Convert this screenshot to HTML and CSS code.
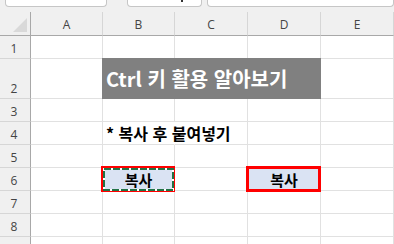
FILE: index.html
```html
<!DOCTYPE html>
<html lang="ko">
  <head>
    <meta charset="UTF-8" />
    <meta name="viewport" content="width=device-width, initial-scale=1.0" />
    <title>Ctrl 키 활용</title>
    <link rel="stylesheet" href="styles.css">
  </head>
  <body>
    <div class="sheet">
      <div class="formula-bar">
        <div class="name-box"></div>
        <div class="fx-box"><span class="chevron"></span></div>
        <div class="formula-box"></div>
      </div>

      <div class="grid">
        <!-- column headers -->
        <div class="corner"><span class="select-all"></span></div>
        <div class="col-head">A</div>
        <div class="col-head">B</div>
        <div class="col-head">C</div>
        <div class="col-head">D</div>
        <div class="col-head">E</div>

        <!-- row 1 -->
        <div class="row-head">1</div>
        <div class="cell"></div>
        <div class="cell"></div>
        <div class="cell"></div>
        <div class="cell"></div>
        <div class="cell"></div>

        <!-- row 2 -->
        <div class="row-head tall">2</div>
        <div class="cell tall"></div>
        <div class="cell title">Ctrl 키 활용 알아보기</div>
        <div class="cell tall"></div>

        <!-- row 3 -->
        <div class="row-head">3</div>
        <div class="cell"></div>
        <div class="cell"></div>
        <div class="cell"></div>
        <div class="cell"></div>
        <div class="cell"></div>

        <!-- row 4 -->
        <div class="row-head">4</div>
        <div class="cell"></div>
        <div class="cell note">* 복사 후 붙여넣기</div>
        <div class="cell"></div>
        <div class="cell"></div>
        <div class="cell"></div>

        <!-- row 5 -->
        <div class="row-head">5</div>
        <div class="cell"></div>
        <div class="cell"></div>
        <div class="cell"></div>
        <div class="cell"></div>
        <div class="cell"></div>

        <!-- row 6 -->
        <div class="row-head">6</div>
        <div class="cell"></div>
        <div class="cell box copied">
          복사
          <span class="copy-frame">
            <svg width="71" height="23" viewBox="0 0 71 23">
              <rect x="1" y="1" width="69" height="21" fill="none" stroke="#fff" stroke-width="2" />
              <rect x="1" y="1" width="69" height="21" fill="none" stroke="#217346" stroke-width="2" stroke-dasharray="7 2" />
            </svg>
          </span>
        </div>
        <div class="cell"></div>
        <div class="cell box pasted">
          복사
          <span class="paste-frame"></span>
        </div>
        <div class="cell"></div>

        <!-- row 7 -->
        <div class="row-head">7</div>
        <div class="cell"></div>
        <div class="cell"></div>
        <div class="cell"></div>
        <div class="cell"></div>
        <div class="cell"></div>

        <!-- row 8 -->
        <div class="row-head">8</div>
        <div class="cell"></div>
        <div class="cell"></div>
        <div class="cell"></div>
        <div class="cell"></div>
        <div class="cell"></div>

        <!-- row 9, cut off by the window -->
        <div class="row-head"></div>
        <div class="cell"></div>
        <div class="cell"></div>
        <div class="cell"></div>
        <div class="cell"></div>
        <div class="cell"></div>
      </div>
    </div>
  </body>
</html>
```

FILE: styles.css
```css
* {
  box-sizing: border-box;
}

body {
  margin: 0;
  background: #ffffff;
  font-family: "Noto Sans CJK KR", "Noto Sans", sans-serif;
  overflow: hidden;
}

.sheet {
  width: 394px;
  height: 244px;
  overflow: hidden;
  background: #f0f0f0;
}

.formula-bar {
  display: flex;
  height: 12px;
  align-items: flex-start;
}

.formula-bar > div {
  height: 7px;
  background: #ffffff;
  border: 1px solid #c6c6c6;
  border-top: none;
  border-radius: 0 0 4px 4px;
}

.name-box {
  width: 102px;
  margin-left: 5px;
}

.fx-box {
  position: relative;
  width: 75px;
  margin-left: 20px;
}

.chevron {
  position: absolute;
  left: 53px;
  top: 0;
  width: 2px;
  height: 2px;
  background: #333333;
}

.formula-box {
  flex: 1;
  margin-left: 5px;
}

.grid {
  display: grid;
  grid-template-columns: 31px 72px 72px 73px 73px 73px;
  grid-template-rows: 24px 23px 40px 23px 23px 23px 23px 23px 23px 23px;
  background: #ffffff;
}

.corner,
.col-head,
.row-head {
  background: #f0f0f0;
  color: #444444;
  font-family: "Open Sans", "Noto Sans", sans-serif;
  font-size: 12px;
}

.corner {
  position: relative;
  border-right: 1px solid #a8a8a8;
  border-bottom: 1px solid #a8a8a8;
}

.select-all {
  position: absolute;
  left: 13px;
  top: 6px;
  width: 0;
  height: 0;
  border-left: 14px solid transparent;
  border-bottom: 14px solid #d9d9d9;
}

.col-head {
  display: flex;
  align-items: center;
  justify-content: center;
  padding-top: 1px;
  border-right: 1px solid #d6d6d6;
  border-bottom: 1px solid #a8a8a8;
}

.row-head {
  display: flex;
  align-items: flex-end;
  justify-content: center;
  padding-bottom: 1px;
  padding-right: 2px;
  border-right: 1px solid #a8a8a8;
  border-bottom: 1px solid #d6d6d6;
}

.cell {
  display: flex;
  align-items: center;
  border-right: 1px solid #e1e1e1;
  border-bottom: 1px solid #e1e1e1;
  font-size: 15px;
  font-weight: 700;
  color: #000000;
  white-space: nowrap;
}

.title {
  grid-column: span 3;
  margin: -1px 0 0 -1px;
  padding: 1px 0 0 4px;
  background: #808080;
  border-color: #808080;
  color: #ffffff;
  font-size: 20px;
}

.note {
  padding-left: 3px;
  font-size: 16px;
  border-right-color: transparent;
}

.box {
  position: relative;
  justify-content: center;
  background: #dae3f3;
}

.copy-frame {
  position: absolute;
  left: -2px;
  top: -2px;
  right: -1px;
  bottom: -2px;
  border: 2px solid #ff0000;
}

.copy-frame svg {
  display: block;
}

.paste-frame {
  position: absolute;
  left: -2px;
  top: -2px;
  right: -1px;
  bottom: -2px;
  border: 3px solid #ff0000;
}
```
